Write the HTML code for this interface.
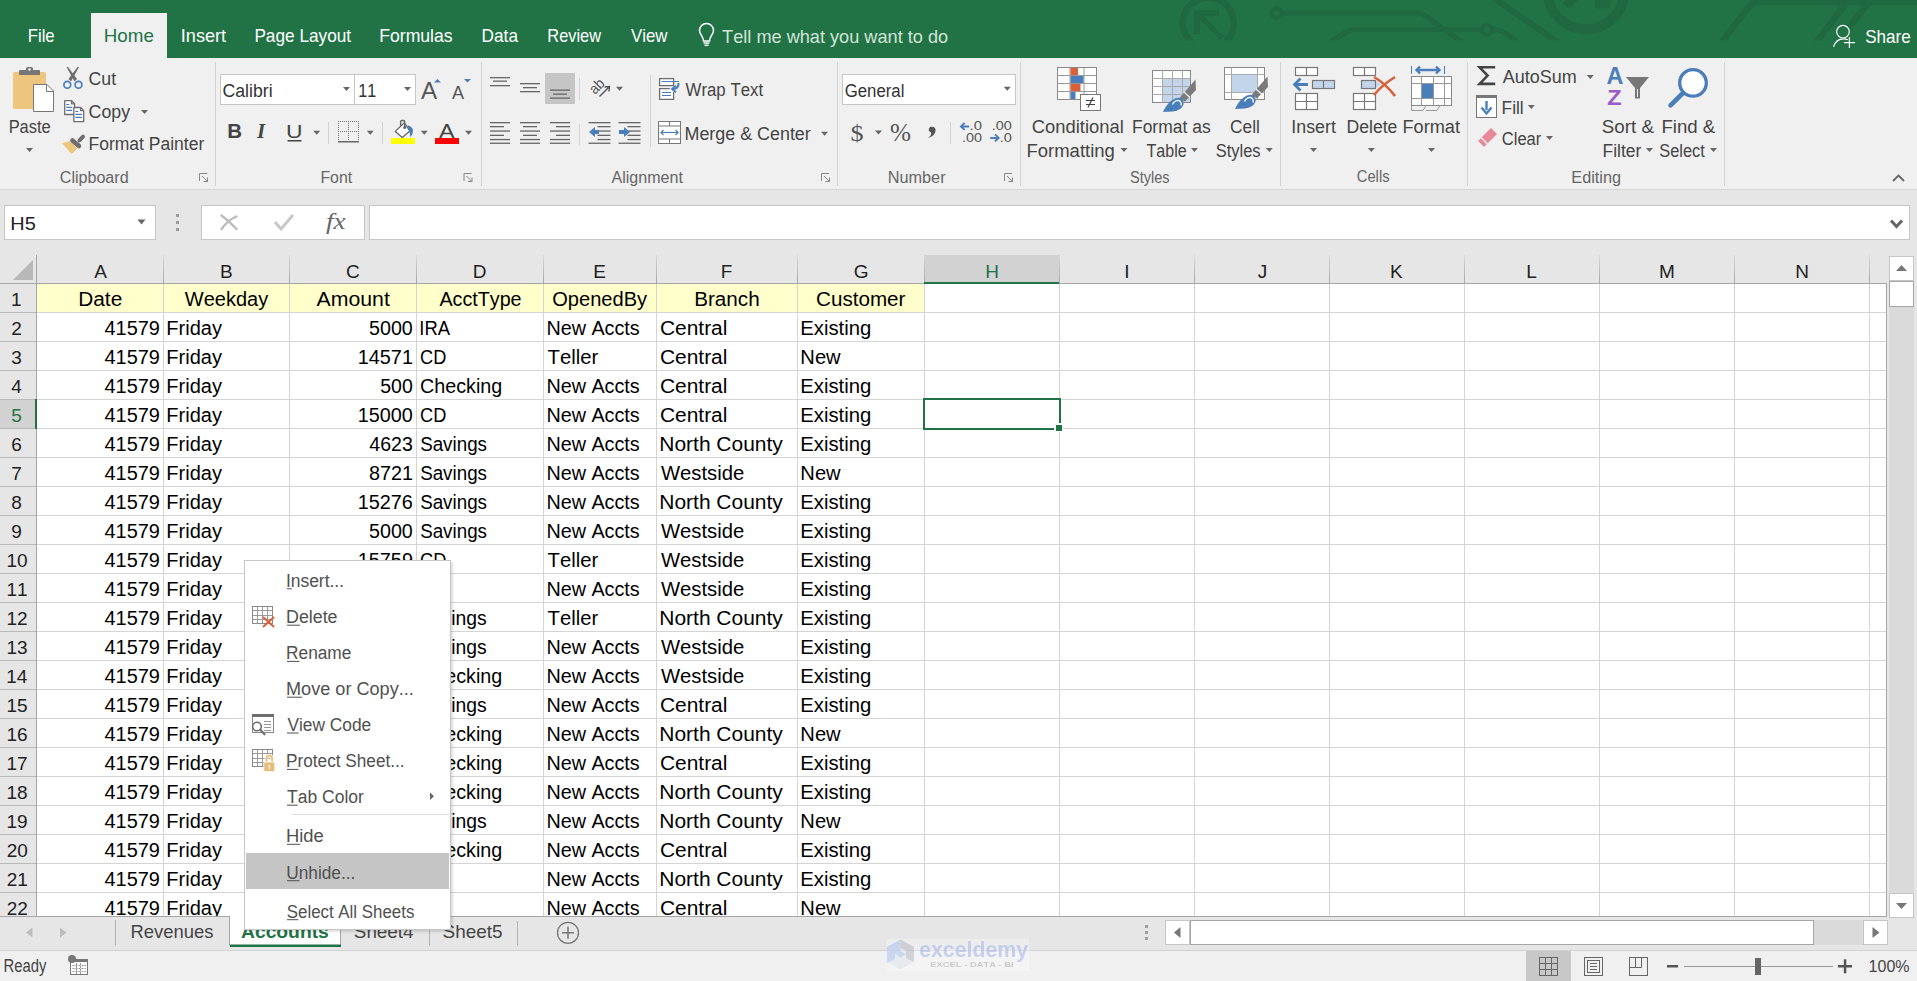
<!DOCTYPE html>
<html><head><meta charset="utf-8"><title>Excel</title>
<style>
html,body{margin:0;padding:0;width:1917px;height:981px;overflow:hidden;background:#f0f0f0;}
svg{display:block;font-family:"Liberation Sans",sans-serif;font-kerning:none;}
</style></head><body>
<svg width="1917" height="981" viewBox="0 0 1917 981">
<rect x="0" y="0" width="1917" height="981" fill="#f0f0f0"/>
<rect x="0" y="0" width="1917" height="58" fill="#217346"/>
<defs><clipPath id="patclip"><rect x="1100" y="0" width="817" height="40.5"/></clipPath></defs>
<g stroke="#1f6840" stroke-width="5" fill="none" clip-path="url(#patclip)" stroke-linejoin="round">
<circle cx="1208.3" cy="23" r="25.5" stroke-width="6.5"/>
<path d="M1197 13 L1222 38" stroke-width="6"/><path d="M1197 34 L1197 13.2 L1219 13.2" stroke-width="6" stroke-linejoin="miter"/>
<circle cx="1276.6" cy="13" r="5" stroke-width="4.2"/>
<path d="M1281.6 13 L1418 13 Q1422 13 1426 16 L1464 44"/>
<path d="M1327 44 L1348 31 Q1351 29.5 1355 29.5 L1482 29.5"/>
<circle cx="1487" cy="29.8" r="4.8" stroke-width="4.2"/>
<path d="M1491.8 29.8 L1497 29.8 Q1500 29.8 1503 32 L1520 44"/>
<path d="M1494 -2 L1560 44" stroke-width="6"/>
<circle cx="1586" cy="-9" r="38.3" stroke-width="10"/>
<rect x="1597.7" y="-2" width="10" height="8" fill="#1f6840"/>
<path d="M1566 6 L1576 -4" stroke-width="8"/>
<path d="M1720 44 L1753 2 L1917 2" stroke-width="6.5"/>
<path d="M1815 44 L1847 2" stroke-width="6.5"/>
<path d="M1848 28 L1869 2" stroke-width="6.5"/>
</g>
<rect x="91" y="13" width="76" height="46" fill="#f0f0f0"/>
<text x="27.73" y="42.00" font-size="19" fill="#ffffff" textLength="26.91" lengthAdjust="spacingAndGlyphs">File</text>
<text x="103.76" y="42.00" font-size="19" fill="#217346" textLength="50.07" lengthAdjust="spacingAndGlyphs">Home</text>
<text x="180.83" y="42.00" font-size="19" fill="#ffffff" textLength="45.30" lengthAdjust="spacingAndGlyphs">Insert</text>
<text x="254.39" y="42.00" font-size="19" fill="#ffffff" textLength="96.74" lengthAdjust="spacingAndGlyphs">Page Layout</text>
<text x="379.26" y="42.00" font-size="19" fill="#ffffff" textLength="73.38" lengthAdjust="spacingAndGlyphs">Formulas</text>
<text x="481.59" y="42.00" font-size="19" fill="#ffffff" textLength="36.41" lengthAdjust="spacingAndGlyphs">Data</text>
<text x="547.36" y="42.00" font-size="19" fill="#ffffff" textLength="53.60" lengthAdjust="spacingAndGlyphs">Review</text>
<text x="630.93" y="42.00" font-size="19" fill="#ffffff" textLength="36.53" lengthAdjust="spacingAndGlyphs">View</text>
<g stroke="#ffffff" stroke-width="1.5" fill="none"><path d="M703.5 41 C703.5 36.5 699.5 34.5 699.5 30.5 A7 7 0 0 1 713.5 30.5 C713.5 34.5 709.5 36.5 709.5 41 Z"/><path d="M703.5 43 L709.5 43"/><path d="M704.5 45.3 L708.5 45.3"/></g>
<text x="722.09" y="43.00" font-size="19" fill="#d3e3d8" textLength="226.07" lengthAdjust="spacingAndGlyphs">Tell me what you want to do</text>
<g stroke="#ffffff" stroke-width="1.2" fill="none"><circle cx="1843" cy="31.7" r="6.3"/><path d="M1833.5 46.8 C1835 42 1839 38.8 1843.5 38.8 C1845 38.8 1846.5 39.2 1847.8 39.8"/><path d="M1844 42.6 L1855 42.6 M1849.4 37.3 L1849.4 48"/></g>
<text x="1865.23" y="43.00" font-size="19" fill="#ffffff" textLength="45.53" lengthAdjust="spacingAndGlyphs">Share</text>
<rect x="215" y="62" width="1" height="124" fill="#d2d2d2"/>
<rect x="481" y="62" width="1" height="124" fill="#d2d2d2"/>
<rect x="837" y="62" width="1" height="124" fill="#d2d2d2"/>
<rect x="1020" y="62" width="1" height="124" fill="#d2d2d2"/>
<rect x="1280" y="62" width="1" height="124" fill="#d2d2d2"/>
<rect x="1467" y="62" width="1" height="124" fill="#d2d2d2"/>
<rect x="1724" y="62" width="1" height="124" fill="#d2d2d2"/>
<rect x="13" y="72" width="33" height="37" rx="2" fill="#eec57c"/>
<path d="M19 75 L19 71 Q19 70 20 70 L26 70 L26 68.5 Q26 67 28 67 L31 67 Q33 67 33 68.5 L33 70 L39 70 Q40 70 40 71 L40 75 Z" fill="#777"/>
<circle cx="29.5" cy="69.5" r="1.3" fill="#f0f0f0"/>
<path d="M33.5 84.5 L47 84.5 L53.5 91 L53.5 111.5 L33.5 111.5 Z" fill="#fff" stroke="#777" stroke-width="1"/>
<path d="M46.5 84.5 L46.5 91.5 L53.5 91.5" fill="none" stroke="#777" stroke-width="1"/>
<text x="8.65" y="133.00" font-size="18" fill="#444444" textLength="42.08" lengthAdjust="spacingAndGlyphs">Paste</text>
<path d="M26.0 148.0 L33.0 148.0 L29.5 152.0 Z" fill="#666"/>
<path d="M66.5 67 L68 67 L77 79 L74.5 81.5 Z" fill="#6e6e6e"/>
<path d="M79 67 L77.5 67 L68.5 79 L71 81.5 Z" fill="#6e6e6e"/>
<g stroke="#4a7ebb" stroke-width="1.7" fill="none"><circle cx="67.3" cy="84.8" r="3.4"/><circle cx="78.5" cy="84.8" r="3.4"/></g>
<text x="88.60" y="85.00" font-size="18" fill="#444444" textLength="27.53" lengthAdjust="spacingAndGlyphs">Cut</text>
<g stroke="#6e6e6e" stroke-width="1.3" fill="#fff" stroke-linejoin="round"><path d="M64.7 100.7 L71.5 100.7 L74.6 103.8 L74.6 114.5 L64.7 114.5 Z"/><path d="M71.5 100.7 L71.5 103.8 L74.6 103.8" fill="none"/><path d="M73.8 107.5 L80.6 107.5 L83.7 110.6 L83.7 121.6 L73.8 121.6 Z"/><path d="M80.6 107.5 L80.6 110.6 L83.7 110.6" fill="none"/></g>
<g stroke="#4a7ebb" stroke-width="1.2" fill="none"><path d="M66.2 104.5 L69.2 104.5 M66.2 107.4 L72.2 107.4 M66.2 110.4 L72.2 110.4 M75.3 111.5 L78.3 111.5 M75.3 114.4 L82 114.4 M75.3 117.4 L82 117.4"/></g>
<text x="88.60" y="118.00" font-size="18" fill="#444444" textLength="41.44" lengthAdjust="spacingAndGlyphs">Copy</text>
<path d="M141.0 110.0 L148.0 110.0 L144.5 114.0 Z" fill="#666"/>
<path d="M62.2 143.2 L69.8 141 L77.5 148.5 L71.5 154 Z" fill="#eec57c"/>
<path d="M72.5 140.5 L79 146" stroke="#6e6e6e" stroke-width="4.6" stroke-linecap="round"/>
<path d="M79.5 140.3 L83 136.7" stroke="#6e6e6e" stroke-width="4" stroke-linecap="round"/>
<text x="88.56" y="150.00" font-size="18" fill="#444444" textLength="115.73" lengthAdjust="spacingAndGlyphs">Format Painter</text>
<text x="59.78" y="182.60" font-size="16" fill="#666666" textLength="68.85" lengthAdjust="spacingAndGlyphs">Clipboard</text>
<g stroke="#888" stroke-width="1" fill="none"><path d="M199.5 181.0 L199.5 173.5 L207.0 173.5"/><path d="M202.0 176.0 L207.5 181.5"/><path d="M203.5 181.5 L207.5 181.5 L207.5 177.5"/></g>
<rect x="220" y="74" width="196" height="31" fill="#c6c6c6"/>
<rect x="221" y="75" width="133" height="29" fill="#fff"/>
<rect x="355" y="75" width="60" height="29" fill="#fff"/>
<text x="222.50" y="97.00" font-size="18" fill="#333" textLength="50.09" lengthAdjust="spacingAndGlyphs">Calibri</text>
<text x="358.37" y="97.00" font-size="18" fill="#333" textLength="18.03" lengthAdjust="spacingAndGlyphs">11</text>
<path d="M343.0 87.0 L350.0 87.0 L346.5 91.0 Z" fill="#666"/>
<path d="M404.0 87.0 L411.0 87.0 L407.5 91.0 Z" fill="#666"/>
<text x="420.95" y="98.70" font-size="23" fill="#555" textLength="16.09" lengthAdjust="spacingAndGlyphs">A</text>
<path d="M434 82.5 L441 82.5 L437.5 79 Z" fill="#4a7ebb"/>
<text x="451.96" y="98.70" font-size="19" fill="#555" textLength="12.07" lengthAdjust="spacingAndGlyphs">A</text>
<path d="M464 79 L471 79 L467.5 82.5 Z" fill="#4a7ebb"/>
<text x="227.23" y="138.20" font-size="21" fill="#444" textLength="14.80" lengthAdjust="spacingAndGlyphs" font-weight="bold">B</text>
<text x="257" y="138.2" font-size="21" font-style="italic" font-family="Liberation Serif" font-weight="bold" fill="#444">I</text>
<text x="285.93" y="138.00" font-size="19" fill="#444" textLength="16.53" lengthAdjust="spacingAndGlyphs">U</text>
<rect x="287.5" y="140" width="14" height="1.5" fill="#444"/>
<path d="M313.2 130.8 L320.2 130.8 L316.7 134.8 Z" fill="#666"/>
<rect x="328" y="122" width="1" height="22" fill="#d2d2d2"/>
<rect x="338" y="121" width="1" height="1" fill="#777"/>
<rect x="340" y="121" width="1" height="1" fill="#777"/>
<rect x="342" y="121" width="1" height="1" fill="#777"/>
<rect x="344" y="121" width="1" height="1" fill="#777"/>
<rect x="346" y="121" width="1" height="1" fill="#777"/>
<rect x="348" y="121" width="1" height="1" fill="#777"/>
<rect x="350" y="121" width="1" height="1" fill="#777"/>
<rect x="352" y="121" width="1" height="1" fill="#777"/>
<rect x="354" y="121" width="1" height="1" fill="#777"/>
<rect x="356" y="121" width="1" height="1" fill="#777"/>
<rect x="358" y="121" width="1" height="1" fill="#777"/>
<rect x="338" y="121" width="1" height="1" fill="#777"/>
<rect x="338" y="123" width="1" height="1" fill="#777"/>
<rect x="338" y="125" width="1" height="1" fill="#777"/>
<rect x="338" y="127" width="1" height="1" fill="#777"/>
<rect x="338" y="129" width="1" height="1" fill="#777"/>
<rect x="338" y="131" width="1" height="1" fill="#777"/>
<rect x="338" y="133" width="1" height="1" fill="#777"/>
<rect x="338" y="135" width="1" height="1" fill="#777"/>
<rect x="338" y="137" width="1" height="1" fill="#777"/>
<rect x="338" y="139" width="1" height="1" fill="#777"/>
<rect x="358" y="121" width="1" height="1" fill="#777"/>
<rect x="358" y="123" width="1" height="1" fill="#777"/>
<rect x="358" y="125" width="1" height="1" fill="#777"/>
<rect x="358" y="127" width="1" height="1" fill="#777"/>
<rect x="358" y="129" width="1" height="1" fill="#777"/>
<rect x="358" y="131" width="1" height="1" fill="#777"/>
<rect x="358" y="133" width="1" height="1" fill="#777"/>
<rect x="358" y="135" width="1" height="1" fill="#777"/>
<rect x="358" y="137" width="1" height="1" fill="#777"/>
<rect x="358" y="139" width="1" height="1" fill="#777"/>
<rect x="348" y="121" width="1" height="1" fill="#777"/>
<rect x="348" y="123" width="1" height="1" fill="#777"/>
<rect x="348" y="125" width="1" height="1" fill="#777"/>
<rect x="348" y="127" width="1" height="1" fill="#777"/>
<rect x="348" y="129" width="1" height="1" fill="#777"/>
<rect x="348" y="131" width="1" height="1" fill="#777"/>
<rect x="348" y="133" width="1" height="1" fill="#777"/>
<rect x="348" y="135" width="1" height="1" fill="#777"/>
<rect x="348" y="137" width="1" height="1" fill="#777"/>
<rect x="348" y="139" width="1" height="1" fill="#777"/>
<rect x="338" y="131" width="1" height="1" fill="#777"/>
<rect x="340" y="131" width="1" height="1" fill="#777"/>
<rect x="342" y="131" width="1" height="1" fill="#777"/>
<rect x="344" y="131" width="1" height="1" fill="#777"/>
<rect x="346" y="131" width="1" height="1" fill="#777"/>
<rect x="348" y="131" width="1" height="1" fill="#777"/>
<rect x="350" y="131" width="1" height="1" fill="#777"/>
<rect x="352" y="131" width="1" height="1" fill="#777"/>
<rect x="354" y="131" width="1" height="1" fill="#777"/>
<rect x="356" y="131" width="1" height="1" fill="#777"/>
<rect x="358" y="131" width="1" height="1" fill="#777"/>
<rect x="338" y="141" width="21" height="1.5" fill="#666"/>
<path d="M366.8 130.8 L373.8 130.8 L370.3 134.8 Z" fill="#666"/>
<rect x="382" y="122" width="1" height="22" fill="#d2d2d2"/>
<path d="M395.3 131.4 L404.3 122.8 L409.8 131 L402.3 137.5 Z" fill="#fff" stroke="#666" stroke-width="1.3" stroke-linejoin="round"/>
<path d="M400.6 126 L400.6 121.8 Q400.6 120.5 402 120.5 L403.3 120.5 Q404.7 120.5 404.7 121.8 L404.7 127" stroke="#666" stroke-width="1.3" fill="none"/>
<circle cx="404.6" cy="127.6" r="1.5" fill="#666"/>
<path d="M407.5 125.3 Q412 126.5 413 130 Q413.2 134 410.5 137.2 Q410.2 132 408 128.5 Z" fill="#4a7ebb"/>
<rect x="391" y="138" width="24" height="6" fill="#ffff00"/>
<path d="M420.8 130.8 L427.8 130.8 L424.3 134.8 Z" fill="#666"/>
<text x="438.95" y="137.50" font-size="21" fill="#444" textLength="15.59" lengthAdjust="spacingAndGlyphs">A</text>
<rect x="435" y="138" width="24" height="6" fill="#ff0000"/>
<path d="M465.0 130.8 L472.0 130.8 L468.5 134.8 Z" fill="#666"/>
<text x="320.40" y="182.80" font-size="16" fill="#666666" textLength="31.72" lengthAdjust="spacingAndGlyphs">Font</text>
<g stroke="#888" stroke-width="1" fill="none"><path d="M464.0 181.0 L464.0 173.5 L471.5 173.5"/><path d="M466.5 176.0 L472.0 181.5"/><path d="M468.0 181.5 L472.0 181.5 L472.0 177.5"/></g>
<rect x="490" y="77" width="20" height="1.3" fill="#666"/>
<rect x="493" y="80.5" width="14" height="1.3" fill="#666"/>
<rect x="490" y="85" width="20" height="1.3" fill="#666"/>
<rect x="520" y="83" width="20" height="1.3" fill="#666"/>
<rect x="523" y="87" width="14" height="1.3" fill="#666"/>
<rect x="520" y="91" width="20" height="1.3" fill="#666"/>
<rect x="545" y="73" width="30" height="31" fill="#c5c5c5"/>
<rect x="550" y="89.5" width="20" height="1.3" fill="#666"/>
<rect x="553" y="93.5" width="14" height="1.3" fill="#666"/>
<rect x="550" y="97.5" width="20" height="1.3" fill="#666"/>
<rect x="579" y="78" width="1" height="22" fill="#d2d2d2"/>
<path d="M599.5 96.5 L609.3 86.7 M604.5 87 L609.5 86.5 L609 91.5" stroke="#555" stroke-width="1.4" fill="none"/>
<text x="0" y="0" font-size="15" fill="#555" transform="translate(595 95) rotate(-45)" textLength="15" lengthAdjust="spacingAndGlyphs">ab</text>
<path d="M616.0 86.7 L623.0 86.7 L619.5 90.7 Z" fill="#666"/>
<rect x="650" y="75" width="1" height="72" fill="#d2d2d2"/>
<g stroke="#6e6e6e" stroke-width="1.3" fill="#fff"><rect x="659.6" y="78.6" width="14" height="7"/><path d="M669.8 88.6 L659.6 88.6 L659.6 99.4 L673.6 99.4 L673.6 92"/></g>
<g stroke="#4a7ebb" stroke-width="1.2" fill="none"><path d="M661.5 81.5 L679 81.5 M662 92.5 L671 92.5 M662 95.5 L671 95.5"/></g>
<path d="M678.5 83 Q679 88.5 673 89" stroke="#4a7ebb" stroke-width="2" fill="none"/>
<path d="M676 85.8 L672 89 L676 92.2" stroke="#4a7ebb" stroke-width="1.8" fill="none"/>
<text x="685.53" y="95.70" font-size="18" fill="#444444" textLength="77.60" lengthAdjust="spacingAndGlyphs">Wrap Text</text>
<rect x="490" y="122" width="20" height="1.3" fill="#666"/>
<rect x="490" y="126" width="14" height="1.3" fill="#666"/>
<rect x="490" y="130.4" width="20" height="1.3" fill="#666"/>
<rect x="490" y="134.7" width="14" height="1.3" fill="#666"/>
<rect x="490" y="138.9" width="20" height="1.3" fill="#666"/>
<rect x="490" y="142.6" width="20" height="1.3" fill="#666"/>
<rect x="520.0" y="122" width="20" height="1.3" fill="#666"/>
<rect x="523.0" y="126" width="14" height="1.3" fill="#666"/>
<rect x="520.0" y="130.4" width="20" height="1.3" fill="#666"/>
<rect x="523.0" y="134.7" width="14" height="1.3" fill="#666"/>
<rect x="520.0" y="138.9" width="20" height="1.3" fill="#666"/>
<rect x="520.0" y="142.6" width="20" height="1.3" fill="#666"/>
<rect x="550" y="122" width="20" height="1.3" fill="#666"/>
<rect x="556" y="126" width="14" height="1.3" fill="#666"/>
<rect x="550" y="130.4" width="20" height="1.3" fill="#666"/>
<rect x="556" y="134.7" width="14" height="1.3" fill="#666"/>
<rect x="550" y="138.9" width="20" height="1.3" fill="#666"/>
<rect x="550" y="142.6" width="20" height="1.3" fill="#666"/>
<rect x="579" y="124" width="1" height="21" fill="#d2d2d2"/>
<rect x="588.5" y="122" width="22" height="1.3" fill="#666"/>
<rect x="597.5" y="126" width="13" height="1.3" fill="#666"/>
<rect x="597.5" y="130.4" width="13" height="1.3" fill="#666"/>
<rect x="597.5" y="134.7" width="13" height="1.3" fill="#666"/>
<rect x="597.5" y="138.9" width="13" height="1.3" fill="#666"/>
<rect x="588.5" y="142.6" width="22" height="1.3" fill="#666"/>
<rect x="618.5" y="122" width="22" height="1.3" fill="#666"/>
<rect x="627.5" y="126" width="13" height="1.3" fill="#666"/>
<rect x="627.5" y="130.4" width="13" height="1.3" fill="#666"/>
<rect x="627.5" y="134.7" width="13" height="1.3" fill="#666"/>
<rect x="627.5" y="138.9" width="13" height="1.3" fill="#666"/>
<rect x="618.5" y="142.6" width="22" height="1.3" fill="#666"/>
<path d="M589 132 L595 127 L595 130 L599 130 L599 134 L595 134 L595 137 Z" fill="#4a7ebb"/>
<path d="M630 132 L624 127 L624 130 L619 130 L619 134 L624 134 L624 137 Z" fill="#4a7ebb"/>
<g stroke="#777" stroke-width="1" fill="#fff"><rect x="658.5" y="121.5" width="22" height="22"/></g>
<g stroke="#777" stroke-width="1" fill="none"><path d="M658.5 126 L680.5 126 M658.5 139 L680.5 139 M669.5 121.5 L669.5 126 M669.5 139 L669.5 143.5"/></g>
<g stroke="#4a7ebb" stroke-width="1.2" fill="none"><path d="M661 132.5 L678 132.5 M663.5 130 L661 132.5 L663.5 135 M675.5 130 L678 132.5 L675.5 135"/></g>
<text x="684.53" y="139.80" font-size="18" fill="#444444" textLength="126.26" lengthAdjust="spacingAndGlyphs">Merge &amp; Center</text>
<path d="M821.0 131.7 L828.0 131.7 L824.5 135.7 Z" fill="#666"/>
<text x="611.47" y="183.00" font-size="16" fill="#666666" textLength="71.45" lengthAdjust="spacingAndGlyphs">Alignment</text>
<g stroke="#888" stroke-width="1" fill="none"><path d="M821.5 181.0 L821.5 173.5 L829.0 173.5"/><path d="M824.0 176.0 L829.5 181.5"/><path d="M825.5 181.5 L829.5 181.5 L829.5 177.5"/></g>
<rect x="842" y="74" width="174" height="31" fill="#c6c6c6"/>
<rect x="843" y="75" width="172" height="29" fill="#fff"/>
<text x="844.76" y="96.80" font-size="18" fill="#333" textLength="59.67" lengthAdjust="spacingAndGlyphs">General</text>
<path d="M1003.8 86.7 L1010.8 86.7 L1007.3 90.7 Z" fill="#666"/>
<text x="850.5" y="140.5" font-size="24" font-family="Liberation Serif" fill="#555" textLength="13" lengthAdjust="spacingAndGlyphs">$</text>
<path d="M875.0 130.5 L882.0 130.5 L878.5 134.5 Z" fill="#666"/>
<text x="890" y="141" font-size="25" font-family="Liberation Serif" fill="#555" textLength="21" lengthAdjust="spacingAndGlyphs">%</text>
<path d="M930 127 Q936 126 935.5 131 Q935 136 928 138 Q932 135 931 132.5 Q927 131 930 127 Z" fill="#555"/>
<rect x="950" y="122" width="1" height="22" fill="#d2d2d2"/>
<text x="969.64" y="129.60" font-size="12.5" fill="#555" textLength="12.45" lengthAdjust="spacingAndGlyphs">.0</text>
<text x="961.98" y="142.00" font-size="12.5" fill="#555" textLength="20.08" lengthAdjust="spacingAndGlyphs">.00</text>
<path d="M969.2 126.4 L961 126.4 M964.6 122.9 L961 126.4 L964.6 129.9" stroke="#4a7ebb" stroke-width="2" fill="none"/>
<text x="991.68" y="129.60" font-size="12.5" fill="#555" textLength="20.08" lengthAdjust="spacingAndGlyphs">.00</text>
<text x="999.68" y="142.00" font-size="12.5" fill="#555" textLength="12.09" lengthAdjust="spacingAndGlyphs">.0</text>
<path d="M990.2 137.9 L998.6 137.9 M995 134.4 L998.6 137.9 L995 141.4" stroke="#4a7ebb" stroke-width="2" fill="none"/>
<text x="887.66" y="182.60" font-size="16" fill="#666666" textLength="57.91" lengthAdjust="spacingAndGlyphs">Number</text>
<g stroke="#888" stroke-width="1" fill="none"><path d="M1004.5 181.0 L1004.5 173.5 L1012.0 173.5"/><path d="M1007.0 176.0 L1012.5 181.5"/><path d="M1008.5 181.5 L1012.5 181.5 L1012.5 177.5"/></g>
<g stroke="#888" stroke-width="1" fill="#fff"><rect x="1057.5" y="67.5" width="39" height="32"/></g>
<path d="M1057.5 75.5 L1096.5 75.5 M1057.5 83.5 L1096.5 83.5 M1057.5 91.5 L1096.5 91.5 M1070 67.5 L1070 99.5 M1084 67.5 L1084 99.5" stroke="#999" stroke-width="1" fill="none"/>
<rect x="1070.5" y="68" width="7.5" height="7" fill="#d9603a"/>
<rect x="1070.5" y="76" width="13" height="7" fill="#4a7ebb"/>
<rect x="1070.5" y="84" width="10" height="7" fill="#d9603a"/>
<rect x="1070.5" y="92" width="5" height="7" fill="#4a7ebb"/>
<rect x="1080.5" y="94.5" width="20" height="16" fill="#fff" stroke="#777" stroke-width="1"/>
<path d="M1086 100.5 L1095 100.5 M1086 104.5 L1095 104.5 M1088 107.5 L1093 97.5" stroke="#444" stroke-width="1.2" fill="none"/>
<text x="1031.77" y="132.80" font-size="18" fill="#444444" textLength="91.96" lengthAdjust="spacingAndGlyphs">Conditional</text>
<text x="1026.48" y="156.90" font-size="18" fill="#444444" textLength="88.41" lengthAdjust="spacingAndGlyphs">Formatting</text>
<path d="M1120.5 148.0 L1127.5 148.0 L1124.0 152.0 Z" fill="#666"/>
<rect x="1152.5" y="70.5" width="38" height="32" fill="#fff" stroke="#888" stroke-width="1"/>
<rect x="1163" y="79" width="27" height="23" fill="#c3d5ea"/>
<path d="M1152.5 78.5 L1190.5 78.5 M1152.5 86.5 L1190.5 86.5 M1152.5 94.5 L1190.5 94.5 M1162.5 70.5 L1162.5 102.5 M1172.5 70.5 L1172.5 102.5 M1182.5 70.5 L1182.5 102.5" stroke="#aaa" stroke-width="1" fill="none"/>
<g transform="translate(0 0)"><path d="M1179.5 98 L1195.5 79.5 L1196 90 L1185 101.5 Z" fill="#7a7a7a"/><path d="M1184 92 L1190 97.5" stroke="#f0f0f0" stroke-width="1.3"/><path d="M1163 112 Q1166 105 1171 101 Q1176 97 1180 98 Q1184.5 100 1183.5 104.5 Q1182 110 1173 111.5 Z" fill="#4a7ebb"/><path d="M1172.5 104.5 Q1174 100.5 1178.5 100.3 Q1182 101.5 1181 105.5" stroke="#fff" stroke-width="1.3" fill="none"/></g>
<text x="1131.97" y="132.80" font-size="18" fill="#444444" textLength="78.67" lengthAdjust="spacingAndGlyphs">Format as</text>
<text x="1146.44" y="156.90" font-size="18" fill="#444444" textLength="40.28" lengthAdjust="spacingAndGlyphs">Table</text>
<path d="M1191.0 148.0 L1198.0 148.0 L1194.5 152.0 Z" fill="#666"/>
<rect x="1224.5" y="67.5" width="40" height="32" fill="#fff" stroke="#888" stroke-width="1"/>
<path d="M1224.5 74.5 L1264.5 74.5 M1224.5 92.5 L1264.5 92.5 M1231.5 67.5 L1231.5 99.5 M1257.5 67.5 L1257.5 99.5" stroke="#aaa" stroke-width="1" fill="none"/>
<rect x="1232" y="75" width="25" height="17" fill="#c3d5ea"/>
<g transform="translate(72 -3)"><path d="M1179.5 98 L1195.5 79.5 L1196 90 L1185 101.5 Z" fill="#7a7a7a"/><path d="M1184 92 L1190 97.5" stroke="#f0f0f0" stroke-width="1.3"/><path d="M1163 112 Q1166 105 1171 101 Q1176 97 1180 98 Q1184.5 100 1183.5 104.5 Q1182 110 1173 111.5 Z" fill="#4a7ebb"/><path d="M1172.5 104.5 Q1174 100.5 1178.5 100.3 Q1182 101.5 1181 105.5" stroke="#fff" stroke-width="1.3" fill="none"/></g>
<text x="1230.12" y="132.80" font-size="18" fill="#444444" textLength="29.73" lengthAdjust="spacingAndGlyphs">Cell</text>
<text x="1215.75" y="156.90" font-size="18" fill="#444444" textLength="44.84" lengthAdjust="spacingAndGlyphs">Styles</text>
<path d="M1265.8 148.0 L1272.8 148.0 L1269.3 152.0 Z" fill="#666"/>
<text x="1129.94" y="182.50" font-size="16" fill="#666666" textLength="39.59" lengthAdjust="spacingAndGlyphs">Styles</text>
<g stroke="#777" stroke-width="1.2" fill="#fff"><rect x="1295.5" y="67.5" width="22" height="8"/><rect x="1295.5" y="93.5" width="22" height="16"/></g>
<path d="M1306.5 67.5 L1306.5 75.5 M1306.5 93.5 L1306.5 109.5 M1295.5 101.5 L1317.5 101.5" stroke="#777" stroke-width="1.2" fill="none"/>
<rect x="1312.5" y="80.5" width="22" height="8" fill="#c3d5ea" stroke="#777" stroke-width="1.2"/><path d="M1323.5 80.5 L1323.5 88.5" stroke="#777" stroke-width="1.2"/>
<path d="M1308 84.5 L1294.5 84.5 M1300.5 78.5 L1294.5 84.5 L1300.5 90.5" stroke="#4a7ebb" stroke-width="2.8" fill="none"/>
<text x="1291.36" y="132.60" font-size="18" fill="#444444" textLength="44.47" lengthAdjust="spacingAndGlyphs">Insert</text>
<path d="M1310.0 148.0 L1317.0 148.0 L1313.5 152.0 Z" fill="#666"/>
<g stroke="#777" stroke-width="1.2" fill="#fff"><rect x="1353.5" y="67.5" width="22" height="8"/><rect x="1353.5" y="93.5" width="22" height="16"/></g>
<path d="M1364.5 67.5 L1364.5 75.5 M1364.5 93.5 L1364.5 109.5 M1353.5 101.5 L1375.5 101.5" stroke="#777" stroke-width="1.2" fill="none"/>
<rect x="1361.5" y="80.5" width="14" height="8" fill="#c3d5ea" stroke="#777" stroke-width="1.2"/><path d="M1376 80.5 L1380.5 84.5 L1376 88.5 Z" fill="#c3d5ea"/>
<path d="M1374 77 Q1386 84 1395 96 M1395 77 Q1382 85 1374 95" stroke="#d9603a" stroke-width="2.6" fill="none"/>
<text x="1346.56" y="132.60" font-size="18" fill="#444444" textLength="50.82" lengthAdjust="spacingAndGlyphs">Delete</text>
<path d="M1367.8 148.0 L1374.8 148.0 L1371.3 152.0 Z" fill="#666"/>
<path d="M1411.5 66 L1411.5 74 M1444.5 66 L1444.5 74" stroke="#4a7ebb" stroke-width="1"/>
<path d="M1416 70 L1440 70 M1420 66.5 L1416.5 70 L1420 73.5 M1436 66.5 L1439.5 70 L1436 73.5" stroke="#4a7ebb" stroke-width="2.4" fill="none"/>
<rect x="1411.5" y="76.5" width="40" height="29" fill="#fff" stroke="#888" stroke-width="1"/>
<path d="M1411.5 83.5 L1451.5 83.5 M1411.5 98.5 L1451.5 98.5 M1421.5 76.5 L1421.5 105.5 M1433.5 76.5 L1433.5 105.5 M1444.5 76.5 L1444.5 105.5" stroke="#999" stroke-width="1" fill="none"/>
<rect x="1422" y="84" width="11" height="14" fill="#4a7ebb"/>
<path d="M1411.5 105.5 L1411.5 110.5 L1423 110.5 L1426 105.5 M1426 110.5 L1437 110.5 L1440 105.5" stroke="#999" stroke-width="1" fill="none"/>
<text x="1402.51" y="132.60" font-size="18" fill="#444444" textLength="57.52" lengthAdjust="spacingAndGlyphs">Format</text>
<path d="M1428.0 148.0 L1435.0 148.0 L1431.5 152.0 Z" fill="#666"/>
<text x="1356.75" y="182.00" font-size="16" fill="#666666" textLength="32.78" lengthAdjust="spacingAndGlyphs">Cells</text>
<path d="M1495.2 67.3 L1479.6 67.3 L1487.6 75.6 L1479.6 83.9 L1495.2 83.9" stroke="#444" stroke-width="2.6" fill="none" stroke-miterlimit="10"/>
<text x="1502.66" y="82.80" font-size="18" fill="#444444">AutoSum</text>
<path d="M1586.8 75.0 L1593.8 75.0 L1590.3 79.0 Z" fill="#666"/>
<rect x="1476.5" y="95.5" width="20" height="22" fill="#fff" stroke="#777" stroke-width="1"/>
<rect x="1476" y="95" width="21" height="3" fill="#777"/>
<path d="M1486.5 101 L1486.5 110" stroke="#4a7ebb" stroke-width="2.4" fill="none"/><path d="M1481.5 107.5 L1486.5 113.5 L1491.5 107.5" stroke="#4a7ebb" stroke-width="2.4" fill="none"/>
<text x="1501.58" y="113.50" font-size="18" fill="#444444" textLength="22.07" lengthAdjust="spacingAndGlyphs">Fill</text>
<path d="M1527.8 105.0 L1534.8 105.0 L1531.3 109.0 Z" fill="#666"/>
<path d="M1478 141 L1491 128 L1497 134 L1484 147 Z" fill="#e8899a"/>
<path d="M1481 137.5 L1487.5 144" stroke="#f0f0f0" stroke-width="1.4"/>
<text x="1501.86" y="144.50" font-size="18" fill="#444444" textLength="39.41" lengthAdjust="spacingAndGlyphs">Clear</text>
<path d="M1546.0 136.0 L1553.0 136.0 L1549.5 140.0 Z" fill="#666"/>
<text x="1606.42" y="83.50" font-size="24" fill="#4a7ebb" textLength="16.90" lengthAdjust="spacingAndGlyphs" font-weight="bold">A</text>
<text x="1607.30" y="105.00" font-size="22" fill="#9a5cc6" textLength="14.38" lengthAdjust="spacingAndGlyphs" font-weight="bold">Z</text>
<path d="M1626 77 L1649 77 L1640 88 L1640 98.5 L1635 98.5 L1635 88 Z" fill="#777"/>
<path d="M1637.5 89 L1637.5 97" stroke="#f0f0f0" stroke-width="1"/>
<text x="1601.85" y="132.50" font-size="18" fill="#444444" textLength="52.15" lengthAdjust="spacingAndGlyphs">Sort &amp;</text>
<text x="1602.57" y="156.90" font-size="18" fill="#444444" textLength="38.72" lengthAdjust="spacingAndGlyphs">Filter</text>
<path d="M1646.0 148.0 L1653.0 148.0 L1649.5 152.0 Z" fill="#666"/>
<circle cx="1693" cy="82.9" r="13.3" fill="#fff" stroke="#4a7ebb" stroke-width="3.3"/>
<path d="M1670.5 105.3 L1682 94" stroke="#4a7ebb" stroke-width="4.6" stroke-linecap="round"/>
<text x="1661.47" y="132.50" font-size="18" fill="#444444" textLength="53.82" lengthAdjust="spacingAndGlyphs">Find &amp;</text>
<text x="1659.26" y="156.90" font-size="18" fill="#444444" textLength="45.56" lengthAdjust="spacingAndGlyphs">Select</text>
<path d="M1710.0 148.0 L1717.0 148.0 L1713.5 152.0 Z" fill="#666"/>
<text x="1571.37" y="182.50" font-size="16" fill="#666666" textLength="49.68" lengthAdjust="spacingAndGlyphs">Editing</text>
<path d="M1893 181 L1898.5 175.5 L1904 181" stroke="#666" stroke-width="1.8" fill="none"/>
<rect x="0" y="189" width="1917" height="1" fill="#d5d5d5"/>
<rect x="0" y="190" width="1917" height="65" fill="#e6e6e6"/>
<rect x="4" y="205" width="152" height="35" fill="#c6c6c6"/>
<rect x="5" y="206" width="150" height="33" fill="#ffffff"/>
<text x="10.37" y="230.00" font-size="19" fill="#222" textLength="25.47" lengthAdjust="spacingAndGlyphs">H5</text>
<path d="M137.5 219.5 L145.5 219.5 L141.5 224.5 Z" fill="#666"/>
<rect x="176" y="214" width="3" height="3" fill="#9a9a9a"/>
<rect x="176" y="221" width="3" height="3" fill="#9a9a9a"/>
<rect x="176" y="228" width="3" height="3" fill="#9a9a9a"/>
<rect x="201" y="205" width="164" height="35" fill="#c6c6c6"/>
<rect x="202" y="206" width="162" height="33" fill="#ffffff"/>
<path d="M221.5 215.5 Q229 221 236.5 229 M236.5 216.5 Q228 220 221.5 229" stroke="#bcbcbc" stroke-width="2.4" fill="none" stroke-linecap="round"/>
<path d="M275 222 L281 229 L293 215" stroke="#c8c8c8" stroke-width="3" fill="none"/>
<text x="326" y="228.8" font-family="Liberation Serif" font-style="italic" font-size="24" fill="#666" textLength="19.5" lengthAdjust="spacingAndGlyphs">fx</text>
<rect x="369" y="205" width="1541" height="35" fill="#c6c6c6"/>
<rect x="370" y="206" width="1539" height="33" fill="#ffffff"/>
<path d="M1891 220.5 L1896.5 226.5 L1902 220.5" stroke="#666" stroke-width="3" fill="none"/>
<rect x="37" y="284" width="1849" height="632" fill="#ffffff"/>
<rect x="0" y="255" width="1887" height="28" fill="#e6e6e6"/>
<rect x="0" y="284" width="36" height="632" fill="#e6e6e6"/>
<rect x="37" y="284" width="887" height="28" fill="#ffffcc"/>
<rect x="924" y="255" width="135" height="28" fill="#d2d2d2"/>
<rect x="0" y="400" width="35" height="28" fill="#d2d2d2"/>
<rect x="37" y="312" width="1849" height="1" fill="#d4d4d4"/>
<rect x="37" y="341" width="1849" height="1" fill="#d4d4d4"/>
<rect x="37" y="370" width="1849" height="1" fill="#d4d4d4"/>
<rect x="37" y="399" width="1849" height="1" fill="#d4d4d4"/>
<rect x="37" y="428" width="1849" height="1" fill="#d4d4d4"/>
<rect x="37" y="457" width="1849" height="1" fill="#d4d4d4"/>
<rect x="37" y="486" width="1849" height="1" fill="#d4d4d4"/>
<rect x="37" y="515" width="1849" height="1" fill="#d4d4d4"/>
<rect x="37" y="544" width="1849" height="1" fill="#d4d4d4"/>
<rect x="37" y="573" width="1849" height="1" fill="#d4d4d4"/>
<rect x="37" y="602" width="1849" height="1" fill="#d4d4d4"/>
<rect x="37" y="631" width="1849" height="1" fill="#d4d4d4"/>
<rect x="37" y="660" width="1849" height="1" fill="#d4d4d4"/>
<rect x="37" y="689" width="1849" height="1" fill="#d4d4d4"/>
<rect x="37" y="718" width="1849" height="1" fill="#d4d4d4"/>
<rect x="37" y="747" width="1849" height="1" fill="#d4d4d4"/>
<rect x="37" y="776" width="1849" height="1" fill="#d4d4d4"/>
<rect x="37" y="805" width="1849" height="1" fill="#d4d4d4"/>
<rect x="37" y="834" width="1849" height="1" fill="#d4d4d4"/>
<rect x="37" y="863" width="1849" height="1" fill="#d4d4d4"/>
<rect x="37" y="892" width="1849" height="1" fill="#d4d4d4"/>
<rect x="163" y="284" width="1" height="632" fill="#d4d4d4"/>
<rect x="289" y="284" width="1" height="632" fill="#d4d4d4"/>
<rect x="416" y="284" width="1" height="632" fill="#d4d4d4"/>
<rect x="543" y="284" width="1" height="632" fill="#d4d4d4"/>
<rect x="656" y="284" width="1" height="632" fill="#d4d4d4"/>
<rect x="797" y="284" width="1" height="632" fill="#d4d4d4"/>
<rect x="924" y="284" width="1" height="632" fill="#d4d4d4"/>
<rect x="1059" y="284" width="1" height="632" fill="#d4d4d4"/>
<rect x="1194" y="284" width="1" height="632" fill="#d4d4d4"/>
<rect x="1329" y="284" width="1" height="632" fill="#d4d4d4"/>
<rect x="1464" y="284" width="1" height="632" fill="#d4d4d4"/>
<rect x="1599" y="284" width="1" height="632" fill="#d4d4d4"/>
<rect x="1734" y="284" width="1" height="632" fill="#d4d4d4"/>
<rect x="1869" y="284" width="1" height="632" fill="#d4d4d4"/>
<rect x="163" y="255" width="1" height="28" fill="url(#hsep)"/>
<rect x="289" y="255" width="1" height="28" fill="url(#hsep)"/>
<rect x="416" y="255" width="1" height="28" fill="url(#hsep)"/>
<rect x="543" y="255" width="1" height="28" fill="url(#hsep)"/>
<rect x="656" y="255" width="1" height="28" fill="url(#hsep)"/>
<rect x="797" y="255" width="1" height="28" fill="url(#hsep)"/>
<rect x="924" y="255" width="1" height="28" fill="url(#hsep)"/>
<rect x="1059" y="255" width="1" height="28" fill="url(#hsep)"/>
<rect x="1194" y="255" width="1" height="28" fill="url(#hsep)"/>
<rect x="1329" y="255" width="1" height="28" fill="url(#hsep)"/>
<rect x="1464" y="255" width="1" height="28" fill="url(#hsep)"/>
<rect x="1599" y="255" width="1" height="28" fill="url(#hsep)"/>
<rect x="1734" y="255" width="1" height="28" fill="url(#hsep)"/>
<rect x="1869" y="255" width="1" height="28" fill="url(#hsep)"/>
<defs><linearGradient id="hsep" x1="0" y1="0" x2="0" y2="1"><stop offset="0" stop-color="#d8d8d8"/><stop offset="1" stop-color="#a8a8a8"/></linearGradient></defs>
<rect x="0" y="312" width="36" height="1" fill="#b9b9b9"/>
<rect x="0" y="341" width="36" height="1" fill="#b9b9b9"/>
<rect x="0" y="370" width="36" height="1" fill="#b9b9b9"/>
<rect x="0" y="399" width="36" height="1" fill="#b9b9b9"/>
<rect x="0" y="428" width="36" height="1" fill="#b9b9b9"/>
<rect x="0" y="457" width="36" height="1" fill="#b9b9b9"/>
<rect x="0" y="486" width="36" height="1" fill="#b9b9b9"/>
<rect x="0" y="515" width="36" height="1" fill="#b9b9b9"/>
<rect x="0" y="544" width="36" height="1" fill="#b9b9b9"/>
<rect x="0" y="573" width="36" height="1" fill="#b9b9b9"/>
<rect x="0" y="602" width="36" height="1" fill="#b9b9b9"/>
<rect x="0" y="631" width="36" height="1" fill="#b9b9b9"/>
<rect x="0" y="660" width="36" height="1" fill="#b9b9b9"/>
<rect x="0" y="689" width="36" height="1" fill="#b9b9b9"/>
<rect x="0" y="718" width="36" height="1" fill="#b9b9b9"/>
<rect x="0" y="747" width="36" height="1" fill="#b9b9b9"/>
<rect x="0" y="776" width="36" height="1" fill="#b9b9b9"/>
<rect x="0" y="805" width="36" height="1" fill="#b9b9b9"/>
<rect x="0" y="834" width="36" height="1" fill="#b9b9b9"/>
<rect x="0" y="863" width="36" height="1" fill="#b9b9b9"/>
<rect x="0" y="892" width="36" height="1" fill="#b9b9b9"/>
<rect x="0" y="283" width="1887" height="1" fill="#a6a6a6"/>
<rect x="36" y="255" width="1" height="661" fill="#a6a6a6"/>
<rect x="1886" y="283" width="1" height="634" fill="#a6a6a6"/>
<path d="M13 280 L33 280 L33 260 Z" fill="#b8b8b8"/>
<rect x="924" y="282" width="135" height="2" fill="#217346"/>
<rect x="35" y="399" width="2" height="30" fill="#217346"/>
<text x="94.16" y="278.00" font-size="19" fill="#222">A</text>
<text x="219.89" y="278.00" font-size="19" fill="#222">B</text>
<text x="346.02" y="278.00" font-size="19" fill="#222">C</text>
<text x="472.81" y="278.00" font-size="19" fill="#222">D</text>
<text x="593.29" y="278.00" font-size="19" fill="#222">E</text>
<text x="720.80" y="278.00" font-size="19" fill="#222">F</text>
<text x="853.84" y="278.00" font-size="19" fill="#222">G</text>
<text x="985.13" y="278.00" font-size="19" fill="#217346">H</text>
<text x="1124.36" y="278.00" font-size="19" fill="#222">I</text>
<text x="1257.81" y="278.00" font-size="19" fill="#222">J</text>
<text x="1389.99" y="278.00" font-size="19" fill="#222">K</text>
<text x="1526.25" y="278.00" font-size="19" fill="#222">L</text>
<text x="1659.09" y="278.00" font-size="19" fill="#222">M</text>
<text x="1795.13" y="278.00" font-size="19" fill="#222">N</text>
<text x="10.96" y="306.00" font-size="19" fill="#222">1</text>
<text x="11.22" y="335.00" font-size="19" fill="#222">2</text>
<text x="11.27" y="364.00" font-size="19" fill="#222">3</text>
<text x="11.28" y="393.00" font-size="19" fill="#222">4</text>
<text x="11.24" y="422.00" font-size="19" fill="#217346">5</text>
<text x="11.15" y="451.00" font-size="19" fill="#222">6</text>
<text x="11.21" y="480.00" font-size="19" fill="#222">7</text>
<text x="11.22" y="509.00" font-size="19" fill="#222">8</text>
<text x="11.22" y="538.00" font-size="19" fill="#222">9</text>
<text x="6.38" y="567.00" font-size="19" fill="#222">10</text>
<text x="6.47" y="596.00" font-size="19" fill="#222">11</text>
<text x="6.49" y="625.00" font-size="19" fill="#222">12</text>
<text x="6.43" y="654.00" font-size="19" fill="#222">13</text>
<text x="6.29" y="683.00" font-size="19" fill="#222">14</text>
<text x="6.41" y="712.00" font-size="19" fill="#222">15</text>
<text x="6.43" y="741.00" font-size="19" fill="#222">16</text>
<text x="6.49" y="770.00" font-size="19" fill="#222">17</text>
<text x="6.42" y="799.00" font-size="19" fill="#222">18</text>
<text x="6.46" y="828.00" font-size="19" fill="#222">19</text>
<text x="6.63" y="857.00" font-size="19" fill="#222">20</text>
<text x="6.72" y="886.00" font-size="19" fill="#222">21</text>
<text x="6.73" y="915.00" font-size="19" fill="#222">22</text>
<text x="78.19" y="306.00" font-size="20" fill="#000" textLength="44.04" lengthAdjust="spacingAndGlyphs">Date</text>
<text x="184.81" y="306.00" font-size="20" fill="#000">Weekday</text>
<text x="316.51" y="306.00" font-size="20" fill="#000" textLength="73.30" lengthAdjust="spacingAndGlyphs">Amount</text>
<text x="439.46" y="306.00" font-size="20" fill="#000" textLength="82.11" lengthAdjust="spacingAndGlyphs">AcctType</text>
<text x="552.25" y="306.00" font-size="20" fill="#000" textLength="94.79" lengthAdjust="spacingAndGlyphs">OpenedBy</text>
<text x="694.15" y="306.00" font-size="20" fill="#000" textLength="65.54" lengthAdjust="spacingAndGlyphs">Branch</text>
<text x="816.00" y="306.00" font-size="20" fill="#000" textLength="89.49" lengthAdjust="spacingAndGlyphs">Customer</text>
<g clip-path="url(#sheetclip)">
<defs><clipPath id="sheetclip"><rect x="37" y="284" width="1849" height="632"/></clipPath></defs>
<text x="104.54" y="335.00" font-size="20" fill="#000" textLength="55.40" lengthAdjust="spacingAndGlyphs">41579</text>
<text x="166.36" y="335.00" font-size="20" fill="#000" textLength="55.68" lengthAdjust="spacingAndGlyphs">Friday</text>
<text x="369.01" y="335.00" font-size="20" fill="#000" textLength="43.76" lengthAdjust="spacingAndGlyphs">5000</text>
<text x="419.30" y="335.00" font-size="20" fill="#000" textLength="30.74" lengthAdjust="spacingAndGlyphs">IRA</text>
<text x="546.38" y="335.00" font-size="20" fill="#000" textLength="93.34" lengthAdjust="spacingAndGlyphs">New Accts</text>
<text x="659.94" y="335.00" font-size="20" fill="#000" textLength="67.46" lengthAdjust="spacingAndGlyphs">Central</text>
<text x="800.34" y="335.00" font-size="20" fill="#000" textLength="70.97" lengthAdjust="spacingAndGlyphs">Existing</text>
<text x="104.54" y="364.00" font-size="20" fill="#000" textLength="55.40" lengthAdjust="spacingAndGlyphs">41579</text>
<text x="166.36" y="364.00" font-size="20" fill="#000" textLength="55.68" lengthAdjust="spacingAndGlyphs">Friday</text>
<text x="357.69" y="364.00" font-size="20" fill="#000" textLength="55.29" lengthAdjust="spacingAndGlyphs">14571</text>
<text x="420.08" y="364.00" font-size="20" fill="#000" textLength="26.30" lengthAdjust="spacingAndGlyphs">CD</text>
<text x="547.55" y="364.00" font-size="20" fill="#000" textLength="50.59" lengthAdjust="spacingAndGlyphs">Teller</text>
<text x="659.94" y="364.00" font-size="20" fill="#000" textLength="67.46" lengthAdjust="spacingAndGlyphs">Central</text>
<text x="800.35" y="364.00" font-size="20" fill="#000" textLength="40.30" lengthAdjust="spacingAndGlyphs">New</text>
<text x="104.54" y="393.00" font-size="20" fill="#000" textLength="55.40" lengthAdjust="spacingAndGlyphs">41579</text>
<text x="166.36" y="393.00" font-size="20" fill="#000" textLength="55.68" lengthAdjust="spacingAndGlyphs">Friday</text>
<text x="380.22" y="393.00" font-size="20" fill="#000" textLength="32.54" lengthAdjust="spacingAndGlyphs">500</text>
<text x="420.00" y="393.00" font-size="20" fill="#000" textLength="82.27" lengthAdjust="spacingAndGlyphs">Checking</text>
<text x="546.38" y="393.00" font-size="20" fill="#000" textLength="93.34" lengthAdjust="spacingAndGlyphs">New Accts</text>
<text x="659.94" y="393.00" font-size="20" fill="#000" textLength="67.46" lengthAdjust="spacingAndGlyphs">Central</text>
<text x="800.34" y="393.00" font-size="20" fill="#000" textLength="70.97" lengthAdjust="spacingAndGlyphs">Existing</text>
<text x="104.54" y="422.00" font-size="20" fill="#000" textLength="55.40" lengthAdjust="spacingAndGlyphs">41579</text>
<text x="166.36" y="422.00" font-size="20" fill="#000" textLength="55.68" lengthAdjust="spacingAndGlyphs">Friday</text>
<text x="357.69" y="422.00" font-size="20" fill="#000" textLength="55.08" lengthAdjust="spacingAndGlyphs">15000</text>
<text x="420.08" y="422.00" font-size="20" fill="#000" textLength="26.30" lengthAdjust="spacingAndGlyphs">CD</text>
<text x="546.38" y="422.00" font-size="20" fill="#000" textLength="93.34" lengthAdjust="spacingAndGlyphs">New Accts</text>
<text x="659.94" y="422.00" font-size="20" fill="#000" textLength="67.46" lengthAdjust="spacingAndGlyphs">Central</text>
<text x="800.34" y="422.00" font-size="20" fill="#000" textLength="70.97" lengthAdjust="spacingAndGlyphs">Existing</text>
<text x="104.54" y="451.00" font-size="20" fill="#000" textLength="55.40" lengthAdjust="spacingAndGlyphs">41579</text>
<text x="166.36" y="451.00" font-size="20" fill="#000" textLength="55.68" lengthAdjust="spacingAndGlyphs">Friday</text>
<text x="369.35" y="451.00" font-size="20" fill="#000" textLength="43.51" lengthAdjust="spacingAndGlyphs">4623</text>
<text x="420.15" y="451.00" font-size="20" fill="#000" textLength="66.83" lengthAdjust="spacingAndGlyphs">Savings</text>
<text x="546.38" y="451.00" font-size="20" fill="#000" textLength="93.34" lengthAdjust="spacingAndGlyphs">New Accts</text>
<text x="659.28" y="451.00" font-size="20" fill="#000" textLength="123.56" lengthAdjust="spacingAndGlyphs">North County</text>
<text x="800.34" y="451.00" font-size="20" fill="#000" textLength="70.97" lengthAdjust="spacingAndGlyphs">Existing</text>
<text x="104.54" y="480.00" font-size="20" fill="#000" textLength="55.40" lengthAdjust="spacingAndGlyphs">41579</text>
<text x="166.36" y="480.00" font-size="20" fill="#000" textLength="55.68" lengthAdjust="spacingAndGlyphs">Friday</text>
<text x="368.94" y="480.00" font-size="20" fill="#000" textLength="44.03" lengthAdjust="spacingAndGlyphs">8721</text>
<text x="420.15" y="480.00" font-size="20" fill="#000" textLength="66.83" lengthAdjust="spacingAndGlyphs">Savings</text>
<text x="546.38" y="480.00" font-size="20" fill="#000" textLength="93.34" lengthAdjust="spacingAndGlyphs">New Accts</text>
<text x="660.91" y="480.00" font-size="20" fill="#000" textLength="83.39" lengthAdjust="spacingAndGlyphs">Westside</text>
<text x="800.35" y="480.00" font-size="20" fill="#000" textLength="40.30" lengthAdjust="spacingAndGlyphs">New</text>
<text x="104.54" y="509.00" font-size="20" fill="#000" textLength="55.40" lengthAdjust="spacingAndGlyphs">41579</text>
<text x="166.36" y="509.00" font-size="20" fill="#000" textLength="55.68" lengthAdjust="spacingAndGlyphs">Friday</text>
<text x="357.69" y="509.00" font-size="20" fill="#000" textLength="55.18" lengthAdjust="spacingAndGlyphs">15276</text>
<text x="420.15" y="509.00" font-size="20" fill="#000" textLength="66.83" lengthAdjust="spacingAndGlyphs">Savings</text>
<text x="546.38" y="509.00" font-size="20" fill="#000" textLength="93.34" lengthAdjust="spacingAndGlyphs">New Accts</text>
<text x="659.28" y="509.00" font-size="20" fill="#000" textLength="123.56" lengthAdjust="spacingAndGlyphs">North County</text>
<text x="800.34" y="509.00" font-size="20" fill="#000" textLength="70.97" lengthAdjust="spacingAndGlyphs">Existing</text>
<text x="104.54" y="538.00" font-size="20" fill="#000" textLength="55.40" lengthAdjust="spacingAndGlyphs">41579</text>
<text x="166.36" y="538.00" font-size="20" fill="#000" textLength="55.68" lengthAdjust="spacingAndGlyphs">Friday</text>
<text x="369.01" y="538.00" font-size="20" fill="#000" textLength="43.76" lengthAdjust="spacingAndGlyphs">5000</text>
<text x="420.15" y="538.00" font-size="20" fill="#000" textLength="66.83" lengthAdjust="spacingAndGlyphs">Savings</text>
<text x="546.38" y="538.00" font-size="20" fill="#000" textLength="93.34" lengthAdjust="spacingAndGlyphs">New Accts</text>
<text x="660.91" y="538.00" font-size="20" fill="#000" textLength="83.39" lengthAdjust="spacingAndGlyphs">Westside</text>
<text x="800.34" y="538.00" font-size="20" fill="#000" textLength="70.97" lengthAdjust="spacingAndGlyphs">Existing</text>
<text x="104.54" y="567.00" font-size="20" fill="#000" textLength="55.40" lengthAdjust="spacingAndGlyphs">41579</text>
<text x="166.36" y="567.00" font-size="20" fill="#000" textLength="55.68" lengthAdjust="spacingAndGlyphs">Friday</text>
<text x="357.69" y="567.00" font-size="20" fill="#000" textLength="55.25" lengthAdjust="spacingAndGlyphs">15759</text>
<text x="420.08" y="567.00" font-size="20" fill="#000" textLength="26.30" lengthAdjust="spacingAndGlyphs">CD</text>
<text x="547.55" y="567.00" font-size="20" fill="#000" textLength="50.59" lengthAdjust="spacingAndGlyphs">Teller</text>
<text x="660.91" y="567.00" font-size="20" fill="#000" textLength="83.39" lengthAdjust="spacingAndGlyphs">Westside</text>
<text x="800.34" y="567.00" font-size="20" fill="#000" textLength="70.97" lengthAdjust="spacingAndGlyphs">Existing</text>
<text x="104.54" y="596.00" font-size="20" fill="#000" textLength="55.40" lengthAdjust="spacingAndGlyphs">41579</text>
<text x="166.36" y="596.00" font-size="20" fill="#000" textLength="55.68" lengthAdjust="spacingAndGlyphs">Friday</text>
<text x="369.01" y="596.00" font-size="20" fill="#000" textLength="43.76" lengthAdjust="spacingAndGlyphs">5000</text>
<text x="420.08" y="596.00" font-size="20" fill="#000" textLength="26.30" lengthAdjust="spacingAndGlyphs">CD</text>
<text x="546.38" y="596.00" font-size="20" fill="#000" textLength="93.34" lengthAdjust="spacingAndGlyphs">New Accts</text>
<text x="660.91" y="596.00" font-size="20" fill="#000" textLength="83.39" lengthAdjust="spacingAndGlyphs">Westside</text>
<text x="800.34" y="596.00" font-size="20" fill="#000" textLength="70.97" lengthAdjust="spacingAndGlyphs">Existing</text>
<text x="104.54" y="625.00" font-size="20" fill="#000" textLength="55.40" lengthAdjust="spacingAndGlyphs">41579</text>
<text x="166.36" y="625.00" font-size="20" fill="#000" textLength="55.68" lengthAdjust="spacingAndGlyphs">Friday</text>
<text x="369.01" y="625.00" font-size="20" fill="#000" textLength="43.76" lengthAdjust="spacingAndGlyphs">5000</text>
<text x="451.21" y="625.00" font-size="20" fill="#000" textLength="35.49" lengthAdjust="spacingAndGlyphs">ings</text>
<text x="547.55" y="625.00" font-size="20" fill="#000" textLength="50.59" lengthAdjust="spacingAndGlyphs">Teller</text>
<text x="659.28" y="625.00" font-size="20" fill="#000" textLength="123.56" lengthAdjust="spacingAndGlyphs">North County</text>
<text x="800.34" y="625.00" font-size="20" fill="#000" textLength="70.97" lengthAdjust="spacingAndGlyphs">Existing</text>
<text x="104.54" y="654.00" font-size="20" fill="#000" textLength="55.40" lengthAdjust="spacingAndGlyphs">41579</text>
<text x="166.36" y="654.00" font-size="20" fill="#000" textLength="55.68" lengthAdjust="spacingAndGlyphs">Friday</text>
<text x="369.01" y="654.00" font-size="20" fill="#000" textLength="43.76" lengthAdjust="spacingAndGlyphs">5000</text>
<text x="451.21" y="654.00" font-size="20" fill="#000" textLength="35.49" lengthAdjust="spacingAndGlyphs">ings</text>
<text x="546.38" y="654.00" font-size="20" fill="#000" textLength="93.34" lengthAdjust="spacingAndGlyphs">New Accts</text>
<text x="660.91" y="654.00" font-size="20" fill="#000" textLength="83.39" lengthAdjust="spacingAndGlyphs">Westside</text>
<text x="800.34" y="654.00" font-size="20" fill="#000" textLength="70.97" lengthAdjust="spacingAndGlyphs">Existing</text>
<text x="104.54" y="683.00" font-size="20" fill="#000" textLength="55.40" lengthAdjust="spacingAndGlyphs">41579</text>
<text x="166.36" y="683.00" font-size="20" fill="#000" textLength="55.68" lengthAdjust="spacingAndGlyphs">Friday</text>
<text x="369.01" y="683.00" font-size="20" fill="#000" textLength="43.76" lengthAdjust="spacingAndGlyphs">5000</text>
<text x="420.00" y="683.00" font-size="20" fill="#000" textLength="82.27" lengthAdjust="spacingAndGlyphs">Checking</text>
<text x="546.38" y="683.00" font-size="20" fill="#000" textLength="93.34" lengthAdjust="spacingAndGlyphs">New Accts</text>
<text x="660.91" y="683.00" font-size="20" fill="#000" textLength="83.39" lengthAdjust="spacingAndGlyphs">Westside</text>
<text x="800.34" y="683.00" font-size="20" fill="#000" textLength="70.97" lengthAdjust="spacingAndGlyphs">Existing</text>
<text x="104.54" y="712.00" font-size="20" fill="#000" textLength="55.40" lengthAdjust="spacingAndGlyphs">41579</text>
<text x="166.36" y="712.00" font-size="20" fill="#000" textLength="55.68" lengthAdjust="spacingAndGlyphs">Friday</text>
<text x="369.01" y="712.00" font-size="20" fill="#000" textLength="43.76" lengthAdjust="spacingAndGlyphs">5000</text>
<text x="451.21" y="712.00" font-size="20" fill="#000" textLength="35.49" lengthAdjust="spacingAndGlyphs">ings</text>
<text x="546.38" y="712.00" font-size="20" fill="#000" textLength="93.34" lengthAdjust="spacingAndGlyphs">New Accts</text>
<text x="659.94" y="712.00" font-size="20" fill="#000" textLength="67.46" lengthAdjust="spacingAndGlyphs">Central</text>
<text x="800.34" y="712.00" font-size="20" fill="#000" textLength="70.97" lengthAdjust="spacingAndGlyphs">Existing</text>
<text x="104.54" y="741.00" font-size="20" fill="#000" textLength="55.40" lengthAdjust="spacingAndGlyphs">41579</text>
<text x="166.36" y="741.00" font-size="20" fill="#000" textLength="55.68" lengthAdjust="spacingAndGlyphs">Friday</text>
<text x="369.01" y="741.00" font-size="20" fill="#000" textLength="43.76" lengthAdjust="spacingAndGlyphs">5000</text>
<text x="420.00" y="741.00" font-size="20" fill="#000" textLength="82.27" lengthAdjust="spacingAndGlyphs">Checking</text>
<text x="546.38" y="741.00" font-size="20" fill="#000" textLength="93.34" lengthAdjust="spacingAndGlyphs">New Accts</text>
<text x="659.28" y="741.00" font-size="20" fill="#000" textLength="123.56" lengthAdjust="spacingAndGlyphs">North County</text>
<text x="800.35" y="741.00" font-size="20" fill="#000" textLength="40.30" lengthAdjust="spacingAndGlyphs">New</text>
<text x="104.54" y="770.00" font-size="20" fill="#000" textLength="55.40" lengthAdjust="spacingAndGlyphs">41579</text>
<text x="166.36" y="770.00" font-size="20" fill="#000" textLength="55.68" lengthAdjust="spacingAndGlyphs">Friday</text>
<text x="369.01" y="770.00" font-size="20" fill="#000" textLength="43.76" lengthAdjust="spacingAndGlyphs">5000</text>
<text x="420.00" y="770.00" font-size="20" fill="#000" textLength="82.27" lengthAdjust="spacingAndGlyphs">Checking</text>
<text x="546.38" y="770.00" font-size="20" fill="#000" textLength="93.34" lengthAdjust="spacingAndGlyphs">New Accts</text>
<text x="659.94" y="770.00" font-size="20" fill="#000" textLength="67.46" lengthAdjust="spacingAndGlyphs">Central</text>
<text x="800.34" y="770.00" font-size="20" fill="#000" textLength="70.97" lengthAdjust="spacingAndGlyphs">Existing</text>
<text x="104.54" y="799.00" font-size="20" fill="#000" textLength="55.40" lengthAdjust="spacingAndGlyphs">41579</text>
<text x="166.36" y="799.00" font-size="20" fill="#000" textLength="55.68" lengthAdjust="spacingAndGlyphs">Friday</text>
<text x="369.01" y="799.00" font-size="20" fill="#000" textLength="43.76" lengthAdjust="spacingAndGlyphs">5000</text>
<text x="420.00" y="799.00" font-size="20" fill="#000" textLength="82.27" lengthAdjust="spacingAndGlyphs">Checking</text>
<text x="546.38" y="799.00" font-size="20" fill="#000" textLength="93.34" lengthAdjust="spacingAndGlyphs">New Accts</text>
<text x="659.28" y="799.00" font-size="20" fill="#000" textLength="123.56" lengthAdjust="spacingAndGlyphs">North County</text>
<text x="800.34" y="799.00" font-size="20" fill="#000" textLength="70.97" lengthAdjust="spacingAndGlyphs">Existing</text>
<text x="104.54" y="828.00" font-size="20" fill="#000" textLength="55.40" lengthAdjust="spacingAndGlyphs">41579</text>
<text x="166.36" y="828.00" font-size="20" fill="#000" textLength="55.68" lengthAdjust="spacingAndGlyphs">Friday</text>
<text x="369.01" y="828.00" font-size="20" fill="#000" textLength="43.76" lengthAdjust="spacingAndGlyphs">5000</text>
<text x="451.21" y="828.00" font-size="20" fill="#000" textLength="35.49" lengthAdjust="spacingAndGlyphs">ings</text>
<text x="546.38" y="828.00" font-size="20" fill="#000" textLength="93.34" lengthAdjust="spacingAndGlyphs">New Accts</text>
<text x="659.28" y="828.00" font-size="20" fill="#000" textLength="123.56" lengthAdjust="spacingAndGlyphs">North County</text>
<text x="800.35" y="828.00" font-size="20" fill="#000" textLength="40.30" lengthAdjust="spacingAndGlyphs">New</text>
<text x="104.54" y="857.00" font-size="20" fill="#000" textLength="55.40" lengthAdjust="spacingAndGlyphs">41579</text>
<text x="166.36" y="857.00" font-size="20" fill="#000" textLength="55.68" lengthAdjust="spacingAndGlyphs">Friday</text>
<text x="369.01" y="857.00" font-size="20" fill="#000" textLength="43.76" lengthAdjust="spacingAndGlyphs">5000</text>
<text x="420.00" y="857.00" font-size="20" fill="#000" textLength="82.27" lengthAdjust="spacingAndGlyphs">Checking</text>
<text x="546.38" y="857.00" font-size="20" fill="#000" textLength="93.34" lengthAdjust="spacingAndGlyphs">New Accts</text>
<text x="659.94" y="857.00" font-size="20" fill="#000" textLength="67.46" lengthAdjust="spacingAndGlyphs">Central</text>
<text x="800.34" y="857.00" font-size="20" fill="#000" textLength="70.97" lengthAdjust="spacingAndGlyphs">Existing</text>
<text x="104.54" y="886.00" font-size="20" fill="#000" textLength="55.40" lengthAdjust="spacingAndGlyphs">41579</text>
<text x="166.36" y="886.00" font-size="20" fill="#000" textLength="55.68" lengthAdjust="spacingAndGlyphs">Friday</text>
<text x="369.01" y="886.00" font-size="20" fill="#000" textLength="43.76" lengthAdjust="spacingAndGlyphs">5000</text>
<text x="420.08" y="886.00" font-size="20" fill="#000" textLength="26.30" lengthAdjust="spacingAndGlyphs">CD</text>
<text x="546.38" y="886.00" font-size="20" fill="#000" textLength="93.34" lengthAdjust="spacingAndGlyphs">New Accts</text>
<text x="659.28" y="886.00" font-size="20" fill="#000" textLength="123.56" lengthAdjust="spacingAndGlyphs">North County</text>
<text x="800.34" y="886.00" font-size="20" fill="#000" textLength="70.97" lengthAdjust="spacingAndGlyphs">Existing</text>
<text x="104.54" y="915.00" font-size="20" fill="#000" textLength="55.40" lengthAdjust="spacingAndGlyphs">41579</text>
<text x="166.36" y="915.00" font-size="20" fill="#000" textLength="55.68" lengthAdjust="spacingAndGlyphs">Friday</text>
<text x="369.01" y="915.00" font-size="20" fill="#000" textLength="43.76" lengthAdjust="spacingAndGlyphs">5000</text>
<text x="420.08" y="915.00" font-size="20" fill="#000" textLength="26.30" lengthAdjust="spacingAndGlyphs">CD</text>
<text x="546.38" y="915.00" font-size="20" fill="#000" textLength="93.34" lengthAdjust="spacingAndGlyphs">New Accts</text>
<text x="659.94" y="915.00" font-size="20" fill="#000" textLength="67.46" lengthAdjust="spacingAndGlyphs">Central</text>
<text x="800.35" y="915.00" font-size="20" fill="#000" textLength="40.30" lengthAdjust="spacingAndGlyphs">New</text>
</g>
<rect x="924" y="399" width="136" height="30" fill="none" stroke="#217346" stroke-width="2"/>
<rect x="1054" y="423" width="9" height="9" fill="#ffffff"/>
<rect x="1056" y="425" width="6" height="6" fill="#217346"/>
<rect x="1887" y="255" width="30" height="662" fill="#e6e6e6"/>
<rect x="1889" y="306" width="25" height="587" fill="#dadada"/>
<rect x="1889" y="256" width="25" height="25" fill="#c6c6c6"/>
<rect x="1890" y="257" width="23" height="23" fill="#ffffff"/>
<path d="M1896 271 L1907 271 L1901.5 265 Z" fill="#777"/>
<rect x="1889" y="281" width="25" height="26" fill="#a6a6a6"/>
<rect x="1890" y="282" width="23" height="24" fill="#ffffff"/>
<rect x="1889" y="893" width="25" height="25" fill="#c6c6c6"/>
<rect x="1890" y="894" width="23" height="23" fill="#ffffff"/>
<path d="M1896 903 L1907 903 L1901.5 909 Z" fill="#777"/>
<rect x="0" y="916" width="1887" height="1" fill="#a6a6a6"/>
<rect x="0" y="917" width="1917" height="33" fill="#e6e6e6"/>
<rect x="1889" y="917" width="25" height="1" fill="#c6c6c6"/>
<rect x="0" y="950" width="1917" height="1" fill="#d2d2d2"/>
<rect x="0" y="951" width="1917" height="30" fill="#f0f0f0"/>
<path d="M32.5 927.5 L26 932.5 L32.5 937.5 Z" fill="#bdbdbd"/>
<path d="M60 927.5 L66.5 932.5 L60 937.5 Z" fill="#bdbdbd"/>
<rect x="115" y="920" width="1" height="26" fill="#b5b5b5"/>
<rect x="230" y="916" width="111" height="30" fill="#ffffff"/>
<rect x="229" y="916" width="1" height="30" fill="#a6a6a6"/>
<rect x="340" y="916" width="1" height="30" fill="#a6a6a6"/>
<rect x="230" y="944.5" width="111" height="2.5" fill="#217346"/>
<text x="130.39" y="938.20" font-size="19" fill="#444" textLength="83.08" lengthAdjust="spacingAndGlyphs">Revenues</text>
<text x="241.02" y="938.20" font-size="19" fill="#217346" textLength="87.77" lengthAdjust="spacingAndGlyphs" font-weight="bold">Accounts</text>
<text x="353.84" y="938.20" font-size="19" fill="#444" textLength="59.71" lengthAdjust="spacingAndGlyphs">Sheet4</text>
<rect x="429" y="921" width="1" height="25" fill="#b5b5b5"/>
<text x="442.54" y="938.20" font-size="19" fill="#444" textLength="60.06" lengthAdjust="spacingAndGlyphs">Sheet5</text>
<rect x="517" y="921" width="1" height="25" fill="#b5b5b5"/>
<circle cx="568" cy="932.8" r="10.5" fill="none" stroke="#777" stroke-width="1.3"/>
<path d="M562 932.8 L574 932.8 M568 926.8 L568 938.8" stroke="#777" stroke-width="1.5"/>
<rect x="1145" y="925" width="3" height="3" fill="#a0a0a0"/>
<rect x="1145" y="931" width="3" height="3" fill="#a0a0a0"/>
<rect x="1145" y="937" width="3" height="3" fill="#a0a0a0"/>
<rect x="1165" y="920" width="25" height="25" fill="#c6c6c6"/>
<rect x="1166" y="921" width="23" height="23" fill="#ffffff"/>
<path d="M1180.5 927 L1174 932.5 L1180.5 938 Z" fill="#777"/>
<rect x="1190" y="920" width="624" height="25" fill="#a6a6a6"/>
<rect x="1191" y="921" width="622" height="23" fill="#ffffff"/>
<rect x="1814" y="920" width="49" height="25" fill="#dadada"/>
<rect x="1863" y="920" width="25" height="25" fill="#c6c6c6"/>
<rect x="1864" y="921" width="23" height="23" fill="#ffffff"/>
<path d="M1872.5 927 L1879.5 932.5 L1872.5 938 Z" fill="#777"/>
<text x="3.48" y="971.80" font-size="18" fill="#444" textLength="42.95" lengthAdjust="spacingAndGlyphs">Ready</text>
<rect x="70.5" y="960.5" width="17" height="14" fill="#fff" stroke="#777" stroke-width="1"/>
<rect x="70" y="959" width="18" height="3" fill="#777"/>
<circle cx="72" cy="959" r="4" fill="#777"/>
<path d="M72.5 965.5 L86 965.5 M72.5 968.5 L86 968.5 M72.5 971.5 L86 971.5 M76.5 963 L76.5 974 M80.5 963 L80.5 974" stroke="#999" stroke-width="1" stroke-dasharray="2 1"/>
<rect x="887" y="939" width="142" height="32" fill="#ffffff" opacity="0.3"/>
<g opacity="0.6">
<path d="M900.5 939.5 L914 947 L914 962 L900.5 969.5 L887 962 L887 947 Z" fill="#dfe6ee"/>
<path d="M900.5 939.5 L900.5 951 L895 954 L895 959 L887 963 L887 947 Z" fill="#aec4f0"/>
<path d="M900.5 939.5 L914 947 L914 962 L906 958 L906 951 L900.5 948 Z" fill="#b8bcc4"/>
<path d="M895 954 L900.5 951 L906 954 L900.5 957.5 Z" fill="#aec4f0"/>
</g>
<g opacity="0.55">
<text x="919.17" y="956.50" font-size="22" fill="#9fb4ea" textLength="108.95" lengthAdjust="spacingAndGlyphs" font-weight="bold">exceldemy</text>
<text x="930.37" y="966.50" font-size="7.5" fill="#a8a8a8" textLength="83.25" lengthAdjust="spacingAndGlyphs" font-weight="bold">EXCEL - DATA - BI</text>
</g>
<rect x="1526" y="951" width="45" height="30" fill="#c8c8c8"/>
<g fill="none" stroke="#666" stroke-width="1"><rect x="1539.5" y="957.5" width="18" height="18"/><path d="M1545.5 957.5 L1545.5 975.5 M1551.5 957.5 L1551.5 975.5 M1539.5 963.5 L1557.5 963.5 M1539.5 969.5 L1557.5 969.5"/></g>
<g fill="none" stroke="#666" stroke-width="1"><rect x="1584.5" y="957.5" width="18" height="18"/><rect x="1587.5" y="960.5" width="12" height="12"/><path d="M1590 963.5 L1597 963.5 M1590 966.5 L1597 966.5 M1590 969.5 L1597 969.5"/></g>
<g fill="none" stroke="#666" stroke-width="1"><rect x="1629.5" y="957.5" width="18" height="18"/><path d="M1629.5 967.5 L1641.5 967.5 L1641.5 957.5 M1635.5 957.5 L1635.5 967.5"/></g>
<rect x="1667" y="965" width="11" height="2.5" fill="#555"/>
<rect x="1684" y="966" width="149" height="1" fill="#999"/>
<rect x="1755" y="958" width="6" height="17" fill="#666"/>
<rect x="1838" y="965" width="14" height="2.5" fill="#555"/>
<rect x="1843.8" y="959.3" width="2.5" height="14" fill="#555"/>
<text x="1868.58" y="971.80" font-size="17" fill="#444" textLength="40.99" lengthAdjust="spacingAndGlyphs">100%</text>
<defs><filter id="msh" x="-10%" y="-10%" width="120%" height="120%"><feGaussianBlur stdDeviation="1.6"/></filter></defs>
<rect x="246" y="562" width="206.5" height="369.5" fill="#000" opacity="0.16" filter="url(#msh)"/>
<rect x="244" y="560" width="207" height="370" fill="#c6c6c6"/>
<rect x="245" y="561" width="205" height="368" fill="#ffffff"/>
<rect x="246" y="853" width="203" height="36" fill="#c5c5c5"/>
<text x="285.89" y="586.80" font-size="18" fill="#505050" textLength="58.20" lengthAdjust="spacingAndGlyphs">Insert...</text>
<rect x="287" y="588.3" width="4.8" height="1" fill="#505050"/>
<text x="286.04" y="623.20" font-size="18" fill="#505050" textLength="51.45" lengthAdjust="spacingAndGlyphs">Delete</text>
<rect x="287" y="624.7" width="12.9" height="1" fill="#505050"/>
<text x="286.08" y="659.40" font-size="18" fill="#505050" textLength="65.28" lengthAdjust="spacingAndGlyphs">Rename</text>
<rect x="287" y="660.9" width="12.5" height="1" fill="#505050"/>
<text x="286.01" y="695.20" font-size="18" fill="#505050" textLength="127.84" lengthAdjust="spacingAndGlyphs">Move or Copy...</text>
<rect x="287" y="696.7" width="15.1" height="1" fill="#505050"/>
<text x="287.42" y="731.00" font-size="18" fill="#505050" textLength="83.85" lengthAdjust="spacingAndGlyphs">View Code</text>
<rect x="287" y="732.5" width="11.6" height="1" fill="#505050"/>
<text x="286.09" y="767.40" font-size="18" fill="#505050" textLength="118.48" lengthAdjust="spacingAndGlyphs">Protect Sheet...</text>
<rect x="287" y="768.9" width="11.5" height="1" fill="#505050"/>
<text x="287.11" y="803.20" font-size="18" fill="#505050" textLength="76.68" lengthAdjust="spacingAndGlyphs">Tab Color</text>
<rect x="287" y="804.7" width="10.7" height="1" fill="#505050"/>
<text x="285.99" y="842.30" font-size="18" fill="#505050" textLength="37.83" lengthAdjust="spacingAndGlyphs">Hide</text>
<rect x="287" y="843.8" width="13.3" height="1" fill="#505050"/>
<text x="286.17" y="878.70" font-size="18" fill="#505050" textLength="69.21" lengthAdjust="spacingAndGlyphs">Unhide...</text>
<rect x="287" y="880.2" width="12.5" height="1" fill="#505050"/>
<text x="286.73" y="917.70" font-size="18" fill="#505050" textLength="127.68" lengthAdjust="spacingAndGlyphs">Select All Sheets</text>
<rect x="287" y="919.2" width="11.3" height="1" fill="#505050"/>
<rect x="291" y="814" width="158" height="1" fill="#e2e2e2"/>
<path d="M430 792.5 L434 796.3 L430 800 Z" fill="#666"/>
<g stroke="#888" stroke-width="1" fill="#fff"><rect x="252.5" y="606.5" width="20" height="17"/></g>
<path d="M252.5 610.5 L272.5 610.5 M252.5 615.5 L272.5 615.5 M252.5 619.5 L272.5 619.5 M257.5 606.5 L257.5 623.5 M262.5 606.5 L262.5 623.5 M267.5 606.5 L267.5 623.5" stroke="#999" stroke-width="1" fill="none"/>
<path d="M263 617 L274 627 M274 617 L263 627" stroke="#d9603a" stroke-width="2"/>
<rect x="252.5" y="714.5" width="21" height="18" fill="#fff" stroke="#888" stroke-width="1"/>
<rect x="252" y="714" width="22" height="3" fill="#6e6e6e"/>
<path d="M264 721.5 L271 721.5 M264 724.5 L271 724.5 M264 727.5 L271 727.5 M264 730.5 L271 730.5" stroke="#999" stroke-width="1"/>
<circle cx="257" cy="726.5" r="4.3" fill="#fff" stroke="#6e6e6e" stroke-width="1.6"/>
<path d="M260.2 729.8 L264.5 734.3" stroke="#6e6e6e" stroke-width="2.2" stroke-linecap="round"/>
<g stroke="#888" stroke-width="1" fill="#fff"><rect x="252.5" y="749.5" width="20" height="17"/></g>
<path d="M252.5 753.5 L272.5 753.5 M252.5 758.5 L272.5 758.5 M252.5 762.5 L272.5 762.5 M257.5 749.5 L257.5 766.5 M262.5 749.5 L262.5 766.5 M267.5 749.5 L267.5 766.5" stroke="#999" stroke-width="1" fill="none"/>
<path d="M266.5 763 L266.5 758.5 A2.8 2.8 0 0 1 272.1 758.5 L272.1 763" stroke="#fff" stroke-width="3.6" fill="none"/>
<path d="M266.5 763 L266.5 758.5 A2.8 2.8 0 0 1 272.1 758.5 L272.1 763" stroke="#e8bd78" stroke-width="1.8" fill="none"/>
<rect x="263.8" y="762" width="11" height="9.5" rx="1" fill="#e8bd78" stroke="#fff" stroke-width="0.8"/>
<rect x="268.8" y="765" width="1.2" height="4" fill="#fff"/>
</svg>
</body></html>
